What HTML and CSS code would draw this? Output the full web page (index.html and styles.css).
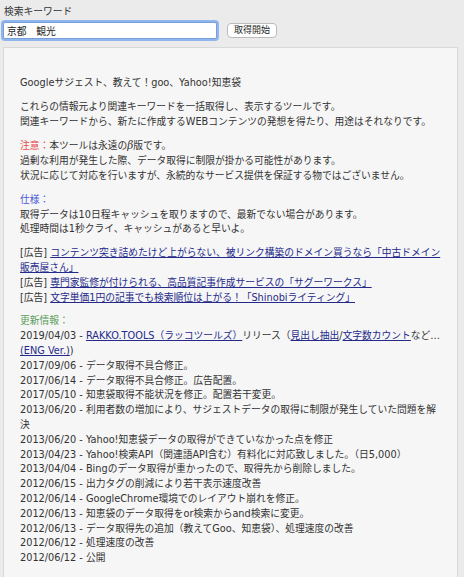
FILE: index.html
```html
<!DOCTYPE html>
<html lang="ja">
<head>
<meta charset="UTF-8">
<meta name="viewport" content="width=device-width, initial-scale=1.0">
<title>関連キーワード取得ツール</title>
<link rel="stylesheet" href="styles.css">
</head>
<body>

<form class="search">
    <label for="keyword">検索キーワード</label>
    <div class="search-row">
        <input type="text" id="keyword" value="京都　観光">
        <button type="button">取得開始</button>
    </div>
</form>

<div class="container">
    <p>Googleサジェスト、教えて！goo、Yahoo!知恵袋</p>

    <p>これらの情報元より関連キーワードを一括取得し、表示するツールです。<br>
    関連キーワードから、新たに作成するWEBコンテンツの発想を得たり、用途はそれなりです。</p>

    <p><span class="note">注意：</span>本ツールは永遠の<i class="beta">β</i>版です。<br>
    過剰な利用が発生した際、データ取得に制限が掛かる可能性があります。<br>
    状況に応じて対応を行いますが、永続的なサービス提供を保証する物ではございません。</p>

    <p><span class="spec">仕様：</span><br>
    取得データは10日程キャッシュを取りますので、最新でない場合があります。<br>
    処理時間は1秒クライ、キャッシュがあると早いよ。</p>

    <p>[広告] <a href="#">コンテンツ突き詰めたけど上がらない、被リンク構築のドメイン買うなら「中古ドメイン販売屋さん」</a><br>
    [広告] <a href="#">専門家監修が付けられる、高品質記事作成サービスの「サグーワークス」</a><br>
    [広告] <a href="#">文字単価1円の記事でも検索順位は上がる！「Shinobiライティング」</a></p>

    <p><span class="news">更新情報：</span><br>
    2019/04/03 - <a href="#">RAKKO.TOOLS（ラッコツールズ）</a>リリース（<a href="#">見出し抽出</a>/<a href="#">文字数カウント</a>など…<a href="#">(ENG Ver.)</a>)<br>
    2017/09/06 - データ取得不具合修正。<br>
    2017/06/14 - データ取得不具合修正。広告配置。<br>
    2017/05/10 - 知恵袋取得不能状況を修正。配置若干変更。<br>
    2013/06/20 - 利用者数の増加により、サジェストデータの取得に制限が発生していた問題を解決<br>
    2013/06/20 - Yahoo!知恵袋データの取得ができていなかった点を修正<br>
    2013/04/23 - Yahoo!検索API（関連語API含む）有料化に対応致しました。（日5,000）<br>
    2013/04/04 - Bingのデータ取得が重かったので、取得先から削除しました。<br>
    2012/06/15 - 出力タグの削減により若干表示速度改善<br>
    2012/06/14 - GoogleChrome環境でのレイアウト崩れを修正。<br>
    2012/06/13 - 知恵袋のデータ取得をor検索からand検索に変更。<br>
    2012/06/13 - データ取得先の追加（教えてGoo、知恵袋）、処理速度の改善<br>
    2012/06/12 - 処理速度の改善<br>
    2012/06/12 - 公開</p>
</div>

</body>
</html>
```

FILE: styles.css
```css
body {
    margin: 0;
    padding: 0;
    background-color: #ebebeb;
    color: #333;
    font-family: "DejaVu Sans", "Noto Sans CJK JP", sans-serif;
    font-size: 9.75px;
    line-height: 14.8px;
}

.search {
    padding: 5px 0 0 4px;
}

.search label {
    display: block;
    line-height: 14px;
}

.search-row {
    display: flex;
    align-items: center;
    gap: 10px;
    margin-top: 3px;
}

.search input {
    width: 206px;
    height: 13px;
    margin-left: -1px;
    padding: 1px 3px;
    border: 1px solid #7a9fd8;
    box-shadow: 0 0 0 2px #8fb6ee;
    border-radius: 2px;
    font-family: inherit;
    font-size: 9.75px;
    color: #222;
    outline: none;
}

.search button {
    height: 15px;
    padding: 0 6px;
    border: 1px solid #bbb;
    border-radius: 4px;
    background-color: #fff;
    font-family: inherit;
    font-size: 9px;
    line-height: 13px;
    color: #222;
}

.container {
    margin: 8px 6px 0 3px;
    padding: 28px 15px 20px 16px;
    border: 1px solid #d9d9d9;
    background-color: #f6f6f6;
}

.container p {
    margin: 0 0 9px;
}

.container a {
    color: #252a8a;
}

.beta {
    font-family: "DejaVu Serif", serif;
    font-size: 10.5px;
}

.note {
    color: #e54848;
}

.spec {
    color: #4a57d8;
}

.news {
    color: #5a9e5a;
}
```
